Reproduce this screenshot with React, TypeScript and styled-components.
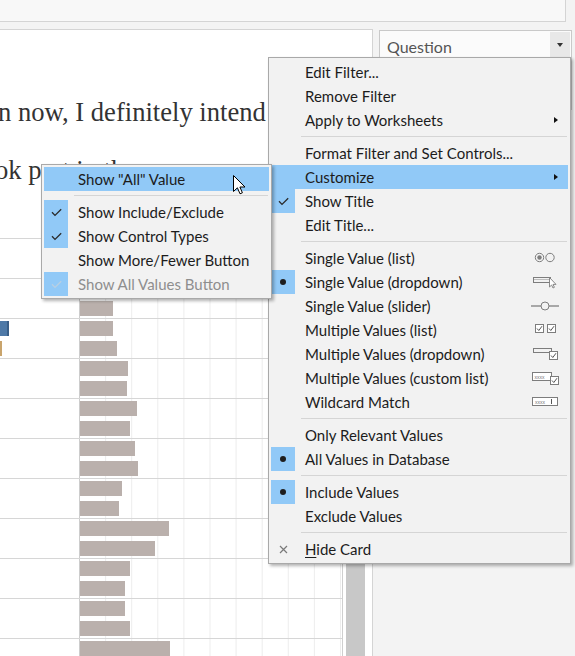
import React from "react";
import styled, { createGlobalStyle } from "styled-components";

const GlobalStyle = createGlobalStyle`
  html, body { margin: 0; padding: 0; }
  body { background: #f3f3f3; overflow: hidden; }
`;

const Page = styled.div`
  position: relative;
  width: 575px;
  height: 656px;
  overflow: hidden;
  background: #f3f3f3;
  display: flex;
  flex-direction: column;
  font-family: Lato, "Noto Sans", sans-serif;
`;

const TopStrip = styled.div`
  flex: none;
  box-sizing: border-box;
  width: 566px;
  height: 22px;
  background: #f8f8f8;
  border-bottom: 1px solid #d4d4d4;
  border-right: 1px solid #d4d4d4;
`;

const Workspace = styled.div`
  flex: 1;
  min-height: 0;
  display: flex;
  margin-top: 7px;
`;

const Sheet = styled.div`
  flex: none;
  box-sizing: border-box;
  width: 373px;
  background: #ffffff;
  border-top: 1px solid #d4d4d4;
  border-right: 1px solid #d4d4d4;
  display: flex;
  flex-direction: column;
  overflow: hidden;
`;

const TextBlock = styled.div`
  flex: none;
  height: 136px;
  padding-top: 56px;
  font-family: "Liberation Serif", "Times New Roman", serif;
  font-size: 26.6px;
  line-height: 53px;
  color: #333333;
  white-space: nowrap;
`;

const TextLine = styled.div<{ $shift: number; $drop?: number }>`
  margin-left: ${(p) => p.$shift}px;
  margin-top: ${(p) => p.$drop ?? 0}px;
`;

const ChartZone = styled.div`
  flex: 1;
  min-height: 0;
  display: flex;
  margin-top: 16px;
`;

const Chart = styled.div`
  flex: none;
  box-sizing: border-box;
  width: 343px;
  border-right: 1px solid #cfcfcf;
  display: flex;
  flex-direction: column;
`;

const Group = styled.div`
  flex: none;
  box-sizing: border-box;
  height: 40px;
  display: flex;
  border-top: 1px solid #d6d6d6;
`;

const LabelCell = styled.div`
  flex: none;
  box-sizing: border-box;
  width: 80px;
  border-right: 1px solid #cdcdcd;
  padding-top: 2px;
  display: flex;
  flex-direction: column;
  gap: 5px;
`;

const BarCell = styled.div`
  flex: 1;
  padding-top: 2px;
  display: flex;
  flex-direction: column;
  gap: 5px;
  background-image: linear-gradient(90deg, transparent 25px, #ececec 25px);
  background-size: 26.1px 100%;
`;

const Bar = styled.div<{ $w: number; $color: string; $edge?: string }>`
  height: 15px;
  width: ${(p) => p.$w}px;
  background: ${(p) => p.$color};
  box-shadow: ${(p) => (p.$edge ? `inset -2px 0 0 ${p.$edge}` : "none")};
`;

const ScrollTrack = styled.div`
  flex: 1;
  display: flex;
  padding: 60px 0 0 3px;
`;

const ScrollThumb = styled.div`
  width: 19px;
  background: #c8c8c8;
`;

const Side = styled.div`
  flex: 1;
  padding: 1px 3px 0 6px;
`;

const Card = styled.div`
  box-sizing: border-box;
  height: 80px;
  background: #fbfbfb;
  border: 1px solid #c9c9c9;
  padding: 1px;
`;

const CardHeader = styled.div`
  height: 25px;
  display: flex;
  align-items: center;
`;

const CardTitle = styled.span`
  flex: 1;
  padding-left: 6px;
  padding-top: 3px;
  font-family: Lato, "Open Sans", sans-serif;
  font-size: 16px;
  color: #555555;
`;

const CardButton = styled.span`
  width: 20px;
  height: 25px;
  background: #e8e8e8;
  display: flex;
  align-items: center;
  justify-content: center;
`;

const DownTri = styled.span`
  width: 0;
  height: 0;
  border-left: 3.5px solid transparent;
  border-right: 3.5px solid transparent;
  border-top: 4px solid #333;
`;

const Menu = styled.div<{ $left: number; $top: number; $width: number }>`
  position: absolute;
  left: ${(p) => p.$left}px;
  top: ${(p) => p.$top}px;
  width: ${(p) => p.$width}px;
  box-sizing: border-box;
  padding: 2px 0;
  background: #f2f2f2;
  border: 1px solid #a9a9a9;
  box-shadow: 2px 2px 3px rgba(0, 0, 0, 0.3);
  font-family: Lato, "Noto Sans", sans-serif;
  font-size: 15px;
`;

const Item = styled.div<{ $active?: boolean; $disabled?: boolean }>`
  height: 24px;
  margin: 0 2px;
  display: flex;
  align-items: center;
  background: ${(p) => (p.$active ? "#91c9f7" : "transparent")};
  color: ${(p) => (p.$disabled ? "#8e8e8e" : "#1c1c1c")};
`;

const Gutter = styled.span<{ $on?: boolean }>`
  flex: none;
  width: 24px;
  height: 24px;
  margin-right: 10px;
  display: flex;
  align-items: center;
  justify-content: center;
  background: ${(p) => (p.$on ? "#91c9f7" : "transparent")};
`;

const Label = styled.span`
  flex: 1;
  white-space: nowrap;
  padding-bottom: 1px;
`;

const Trail = styled.span`
  flex: none;
  width: 32px;
  height: 16px;
  padding-right: 9px;
  display: flex;
  align-items: center;
  justify-content: flex-end;
`;

const RightTri = styled.span`
  width: 0;
  height: 0;
  margin-right: 1px;
  border-top: 3.5px solid transparent;
  border-bottom: 3.5px solid transparent;
  border-left: 4px solid #111;
`;

const Dot = styled.span`
  width: 6.5px;
  height: 6.5px;
  border-radius: 50%;
  background: #1e1e1e;
`;

const Sep = styled.div`
  height: 1px;
  margin: 4px 3px 4px 32px;
  background: #d5d5d5;
`;

const Mnemonic = styled.span`
  text-decoration: underline;
  text-underline-offset: 2px;
`;

const Pointer = styled.svg`
  position: absolute;
  left: 233px;
  top: 175px;
`;

const Check = ({ color = "#2a2a2a" }: { color?: string }) => (
  <svg width="11" height="9" viewBox="0 0 11 9">
    <path d="M1 4.3 L4 7.4 L10.2 1.2" fill="none" stroke={color} strokeWidth="1.3" />
  </svg>
);

const Cross = () => (
  <svg width="9" height="9" viewBox="0 0 9 9">
    <path d="M1 1 L8 8 M8 1 L1 8" stroke="#7a7a7a" strokeWidth="1.2" />
  </svg>
);

const G = "#7d7d7d";

const IconRadios = () => (
  <svg width="30" height="16" viewBox="0 0 30 16">
    <circle cx="10.5" cy="7.5" r="4.2" fill="none" stroke={G} />
    <circle cx="10.5" cy="7.5" r="2.2" fill={G} />
    <circle cx="21" cy="7.5" r="4.2" fill="none" stroke={G} />
  </svg>
);

const IconDropdown = () => (
  <svg width="30" height="16" viewBox="0 0 30 16">
    <rect x="4.5" y="3.5" width="17" height="5" fill="none" stroke={G} />
    <line x1="5" y1="5.5" x2="21" y2="5.5" stroke="#bdbdbd" />
    <path d="M20.5 3.5 L20.5 13 L22.6 11 L24 14 L25.4 13.3 L24 10.4 L27 10.4 Z" fill="#fff" stroke={G} strokeWidth="0.9" />
  </svg>
);

const IconSlider = () => (
  <svg width="30" height="16" viewBox="0 0 30 16">
    <line x1="2" y1="8" x2="30" y2="8" stroke="#a8a8a8" strokeWidth="2" />
    <circle cx="16" cy="8" r="4" fill="#f2f2f2" stroke={G} />
  </svg>
);

const MiniBox = ({ x, y }: { x: number; y: number }) => (
  <g>
    <rect x={x + 0.5} y={y + 0.5} width="8" height="8" fill="#fff" stroke={G} />
    <path d={`M${x + 2} ${y + 4.5} L${x + 3.8} ${y + 6.5} L${x + 7} ${y + 2.2}`} fill="none" stroke="#555" strokeWidth="1" />
  </g>
);

const IconChecks = () => (
  <svg width="30" height="16" viewBox="0 0 30 16">
    <MiniBox x={6} y={2} />
    <MiniBox x={18} y={2} />
  </svg>
);

const IconMultiDrop = () => (
  <svg width="30" height="16" viewBox="0 0 30 16">
    <rect x="4.5" y="2.5" width="18" height="4" fill="none" stroke={G} />
    <MiniBox x={20} y={5} />
  </svg>
);

const IconCustom = () => (
  <svg width="30" height="16" viewBox="0 0 30 16">
    <rect x="3.5" y="2.5" width="19" height="8" fill="#fff" stroke={G} />
    <text x="5.5" y="8.6" fontSize="5" fill="#777" fontFamily="Liberation Sans, sans-serif">xxxx</text>
    <MiniBox x={21} y={6} />
  </svg>
);

const IconWildcard = () => (
  <svg width="30" height="16" viewBox="0 0 30 16">
    <rect x="3.5" y="3.5" width="25" height="8" fill="#fff" stroke={G} />
    <text x="6" y="9.6" fontSize="5" fill="#777" fontFamily="Liberation Sans, sans-serif">xxxx</text>
    <line x1="22.5" y1="5" x2="22.5" y2="10" stroke="#555" />
  </svg>
);

type Mark = "check" | "dot" | "x" | "checkDim";

type Entry =
  | { sep: true }
  | {
      sep?: false;
      label: React.ReactNode;
      mark?: Mark;
      markBg?: boolean;
      active?: boolean;
      disabled?: boolean;
      sub?: boolean;
      icon?: React.ReactNode;
    };

const mainEntries: Entry[] = [
  { label: "Edit Filter..." },
  { label: "Remove Filter" },
  { label: "Apply to Worksheets", sub: true },
  { sep: true },
  { label: "Format Filter and Set Controls..." },
  { label: "Customize", sub: true, active: true },
  { label: "Show Title", mark: "check", markBg: true },
  { label: "Edit Title..." },
  { sep: true },
  { label: "Single Value (list)", icon: <IconRadios /> },
  { label: "Single Value (dropdown)", mark: "dot", markBg: true, icon: <IconDropdown /> },
  { label: "Single Value (slider)", icon: <IconSlider /> },
  { label: "Multiple Values (list)", icon: <IconChecks /> },
  { label: "Multiple Values (dropdown)", icon: <IconMultiDrop /> },
  { label: "Multiple Values (custom list)", icon: <IconCustom /> },
  { label: "Wildcard Match", icon: <IconWildcard /> },
  { sep: true },
  { label: "Only Relevant Values" },
  { label: "All Values in Database", mark: "dot", markBg: true },
  { sep: true },
  { label: "Include Values", mark: "dot", markBg: true },
  { label: "Exclude Values" },
  { sep: true },
  {
    label: (
      <>
        <Mnemonic>H</Mnemonic>ide Card
      </>
    ),
    mark: "x",
  },
];

const subEntries: Entry[] = [
  { label: 'Show "All" Value', active: true },
  { sep: true },
  { label: "Show Include/Exclude", mark: "check", markBg: true },
  { label: "Show Control Types", mark: "check", markBg: true },
  { label: "Show More/Fewer Button" },
  { label: "Show All Values Button", mark: "checkDim", markBg: true, disabled: true },
];

const renderMark = (m?: Mark) => {
  if (m === "check") return <Check />;
  if (m === "checkDim") return <Check color="#b9cfe2" />;
  if (m === "dot") return <Dot />;
  if (m === "x") return <Cross />;
  return null;
};

const MenuList = ({ entries, trail }: { entries: Entry[]; trail: boolean }) => (
  <>
    {entries.map((e, i) =>
      e.sep ? (
        <Sep key={i} />
      ) : (
        <Item key={i} $active={e.active} $disabled={e.disabled}>
          <Gutter $on={e.markBg}>{renderMark(e.mark)}</Gutter>
          <Label>{e.label}</Label>
          {trail && <Trail>{e.sub ? <RightTri /> : e.icon}</Trail>}
        </Item>
      )
    )}
  </>
);

const barWidths = [30, 40, 35, 33, 33, 37, 48, 47, 57, 50, 55, 58, 42, 39, 89, 75, 50, 45, 45, 50, 90, 60];

const leftBars: Record<number, { w: number; color: string; edge?: string }> = {
  4: { w: 9, color: "#4e79a7", edge: "#3a5f88" },
  5: { w: 1.5, color: "#c9a46c" },
};

const groups = Array.from({ length: barWidths.length / 2 }, (_, g) => [g * 2, g * 2 + 1]);

export default function App() {
  return (
    <>
      <GlobalStyle />
      <Page>
        <TopStrip />
        <Workspace>
          <Sheet>
            <TextBlock>
              <TextLine $shift={-2}>n now, I definitely intend</TextLine>
              <TextLine $shift={-5} $drop={5}>ok part in the survey</TextLine>
            </TextBlock>
            <ChartZone>
              <Chart>
                {groups.map((rows, gi) => (
                  <Group key={gi}>
                    <LabelCell>
                      {rows.map((r) =>
                        leftBars[r] ? (
                          <Bar key={r} $w={leftBars[r].w} $color={leftBars[r].color} $edge={leftBars[r].edge} />
                        ) : (
                          <Bar key={r} $w={0} $color="transparent" />
                        )
                      )}
                    </LabelCell>
                    <BarCell>
                      {rows.map((r) => (
                        <Bar key={r} $w={barWidths[r]} $color="#bab0ac" />
                      ))}
                    </BarCell>
                  </Group>
                ))}
              </Chart>
              <ScrollTrack>
                <ScrollThumb />
              </ScrollTrack>
            </ChartZone>
          </Sheet>
          <Side>
            <Card>
              <CardHeader>
                <CardTitle>Question</CardTitle>
                <CardButton>
                  <DownTri />
                </CardButton>
              </CardHeader>
            </Card>
          </Side>
        </Workspace>

        <Menu $left={268} $top={57} $width={303}>
          <MenuList entries={mainEntries} trail />
        </Menu>
        <Menu $left={41} $top={164} $width={231}>
          <MenuList entries={subEntries} trail={false} />
        </Menu>
        <Pointer width="13" height="21" viewBox="0 0 13 21">
          <path
            d="M0.5 0.5 L0.5 16.5 L4.4 12.8 L7 18.8 L9.4 17.8 L6.9 12 L12 12 Z"
            fill="#ffffff"
            stroke="#000000"
            strokeWidth="1"
            strokeLinejoin="round"
          />
        </Pointer>
      </Page>
    </>
  );
}
